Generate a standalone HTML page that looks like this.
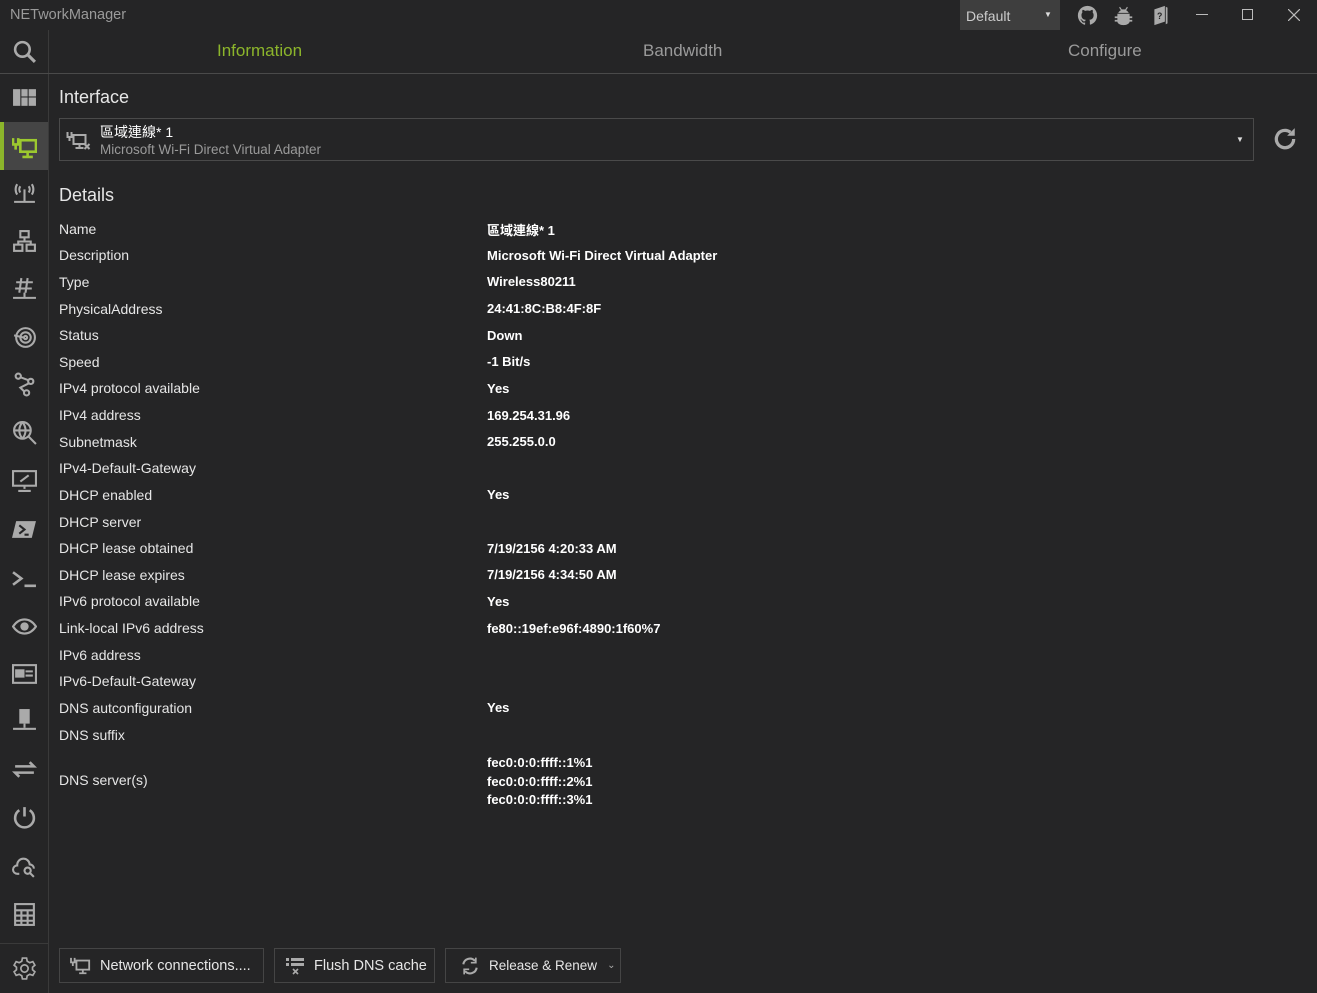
<!DOCTYPE html><html><head><meta charset="utf-8"><style>
*{margin:0;padding:0;box-sizing:border-box}
body{width:1317px;height:993px;background:#252526;font-family:"Liberation Sans","Noto Sans CJK TC",sans-serif;color:#e8e8e8;position:relative;overflow:hidden}
.a{position:absolute;white-space:nowrap}
.t{font-size:14px;color:#9a9a9a}
.tab{font-size:17px;top:41px;color:#9a9a9a}
.lbl{left:59px;font-size:14px;color:#e6e6e6}
.val{left:487px;font-size:13px;font-weight:bold;color:#fff}
.ic{position:absolute;left:12px;width:25px;height:25px}
.ic svg{width:25px;height:25px}
.btn{position:absolute;top:948px;height:35px;border:1px solid #454545;font-size:14.5px;color:#e6e6e6;display:flex;align-items:center;white-space:nowrap}
</style></head><body>
<div class="a t" style="left:10px;top:7px;font-size:14.5px">NETworkManager</div>
<div class="a" style="left:960px;top:0;width:100px;height:30px;background:#3e3e3e"></div>
<div class="a" style="left:966px;top:8px;font-size:14px;color:#ccc">Default</div>
<div class="a" style="left:1044px;top:10px;font-size:8px;color:#ddd">▼</div>
<svg class="a" style="left:1077px;top:5px" width="21" height="21" viewBox="0 0 24 24"><path fill="#aaa" d="M12 1C5.9 1 1 5.9 1 12c0 4.9 3.2 9 7.5 10.5.6.1.8-.2.8-.5v-2c-3.1.7-3.7-1.3-3.7-1.3-.5-1.3-1.2-1.6-1.2-1.6-1-.7.1-.7.1-.7 1.1.1 1.700 1.1 1.7 1.1 1 1.7 2.6 1.2 3.2.9.1-.7.4-1.2.7-1.5-2.4-.3-5-1.2-5-5.4 0-1.2.4-2.2 1.1-3-.1-.3-.5-1.4.1-2.9 0 0 .9-.3 3 1.1a10 10 0 0 1 5.5 0c2.1-1.4 3-1.1 3-1.1.6 1.5.2 2.6.1 2.9.7.8 1.1 1.8 1.1 3 0 4.2-2.6 5.1-5 5.4.4.3.7 1 .7 2v3c0 .3.2.6.8.5C19.8 21 23 16.9 23 12 23 5.9 18.1 1 12 1z"/></svg>
<svg class="a" style="left:1113px;top:5px" width="21" height="21" viewBox="0 0 24 24"><path fill="#aaa" d="M8 2l2 3h4l2-3 1 1-2 3c2 1 3 3 3 3H6s1-2 3-3L7 3zM5 10h14v3h3v2h-3v2h3v2h-3c0 2-3 4-7 4s-7-2-7-4H2v-2h3v-2H2v-2h3z"/></svg>
<svg class="a" style="left:1151px;top:5px" width="19" height="21" viewBox="0 0 20 24"><path fill="#aaa" d="M3 5l12-4v18L3 23zM16 2l2 1v18l-2 1z"/><text x="6" y="16" font-size="10" fill="#252526" font-weight="bold">?</text></svg>
<div class="a" style="left:1196px;top:14px;width:12px;height:1px;background:#bbb"></div>
<div class="a" style="left:1242px;top:9px;width:11px;height:11px;border:1px solid #bbb"></div>
<svg class="a" style="left:1288px;top:9px" width="12" height="12" viewBox="0 0 12 12"><path d="M0 0L12 12M12 0L0 12" stroke="#bbb" stroke-width="1.2"/></svg>

<div class="a" style="left:48px;top:30px;width:1px;height:963px;background:#3a3a3a"></div>
<div class="a" style="left:0;top:73px;width:1317px;height:1px;background:#4a4a4a"></div>
<div class="a" style="left:0;top:943px;width:48px;height:1px;background:#3a3a3a"></div>
<div class="a" style="left:0;top:122px;width:48px;height:48px;background:#454545"></div>
<div class="a" style="left:0;top:122px;width:4px;height:48px;background:#8cb52b"></div>

<div class="ic" style="top:39px"><svg viewBox="0 0 24 24"><circle cx="10" cy="10" r="7" fill="none" stroke="#aaa" stroke-width="2.5"/><path d="M15 15l7 7" stroke="#aaa" stroke-width="3"/></svg></div>
<div class="ic" style="top:85px"><svg viewBox="0 0 24 24" fill="#aaa"><rect x="1" y="4" width="7" height="16"/><rect x="9" y="4" width="6" height="7"/><rect x="16" y="4" width="7" height="7"/><rect x="9" y="12" width="6" height="8"/><rect x="16" y="12" width="7" height="8"/></svg></div>
<div class="ic" style="top:134px"><svg viewBox="0 0 24 24" fill="none" stroke="#9cc92f" stroke-width="2.5"><path d="M1 4v6h5V4M3.5 10v5"/><rect x="8" y="6" width="15" height="11"/><path d="M15 17v4M10 22h10"/></svg></div>
<div class="ic" style="top:180px"><svg viewBox="0 0 24 24" fill="none" stroke="#aaa" stroke-width="2"><path d="M5 4a9 9 0 0 0 0 10M19 4a9 9 0 0 1 0 10M8 6a5 5 0 0 0 0 6M16 6a5 5 0 0 1 0 6M12 9v11M2 21h20"/></svg></div>
<div class="ic" style="top:229px"><svg viewBox="0 0 24 24" fill="none" stroke="#aaa" stroke-width="2"><rect x="8" y="2" width="8" height="6"/><rect x="2" y="15" width="8" height="6"/><rect x="14" y="15" width="8" height="6"/><path d="M12 8v4H6v3M12 12h6v3"/></svg></div>
<div class="ic" style="top:276px"><svg viewBox="0 0 24 24" fill="none" stroke="#aaa" stroke-width="2"><path d="M9 2l-2 14M15 2l-2 14M4 6h16M3 12h16M12 16v4M1 21h22"/></svg></div>
<div class="ic" style="top:325px"><svg viewBox="0 0 24 24" fill="none" stroke="#aaa" stroke-width="2"><circle cx="13" cy="12" r="9"/><circle cx="13" cy="12" r="5"/><circle cx="13" cy="12" r="1.5"/><path d="M2 10l9 2"/></svg></div>
<div class="ic" style="top:372px"><svg viewBox="0 0 24 24" fill="none" stroke="#aaa" stroke-width="2"><circle cx="6" cy="4" r="2.5"/><circle cx="18" cy="9" r="2.5"/><circle cx="14" cy="20" r="2.5"/><path d="M8 5l8 3M16 11l-8 4 4 4"/></svg></div>
<div class="ic" style="top:420px"><svg viewBox="0 0 24 24" fill="none" stroke="#aaa" stroke-width="2"><circle cx="10" cy="10" r="8"/><path d="M2 10h16M10 2c-4 5-4 11 0 16M10 2c4 5 4 11 0 16M16 16l7 7"/></svg></div>
<div class="ic" style="top:468px"><svg viewBox="0 0 24 24" fill="none" stroke="#aaa" stroke-width="2"><rect x="1" y="3" width="22" height="14"/><path d="M12 17v3M6 22h12M8 13l8-6"/></svg></div>
<div class="ic" style="top:517px"><svg viewBox="0 0 24 24"><path d="M4 4h19l-4 16H0z" fill="#aaa"/><path d="M7 8l5 4-5 4M12 17h4" stroke="#252526" stroke-width="2" fill="none"/></svg></div>
<div class="ic" style="top:566px"><svg viewBox="0 0 24 24" fill="none" stroke="#aaa" stroke-width="2.5"><path d="M1 6l8 6-8 6M12 19h11"/></svg></div>
<div class="ic" style="top:614px"><svg viewBox="0 0 24 24" fill="none" stroke="#aaa" stroke-width="2"><path d="M1 12c6-9 16-9 22 0-6 9-16 9-22 0z"/><circle cx="12" cy="12" r="3" fill="#aaa"/></svg></div>
<div class="ic" style="top:662px"><svg viewBox="0 0 24 24" fill="none" stroke="#aaa" stroke-width="2"><rect x="1" y="3" width="22" height="17"/><rect x="4" y="8" width="7" height="6" fill="#aaa"/><path d="M13 9h7M13 13h7"/></svg></div>
<div class="ic" style="top:708px"><svg viewBox="0 0 24 24" fill="#aaa"><rect x="7" y="1" width="10" height="14"/><rect x="11" y="15" width="2" height="4"/><rect x="1" y="19" width="22" height="2"/></svg></div>
<div class="ic" style="top:757px"><svg viewBox="0 0 24 24" fill="none" stroke="#aaa" stroke-width="2.5"><path d="M3 9h18l-4-4M21 15H3l4 4"/></svg></div>
<div class="ic" style="top:805px"><svg viewBox="0 0 24 24" fill="none" stroke="#aaa" stroke-width="2.5"><path d="M12 2v9M7 5a9 9 0 1 0 10 0"/></svg></div>
<div class="ic" style="top:854px"><svg viewBox="0 0 24 24" fill="none" stroke="#aaa" stroke-width="2"><path d="M7 19H5a4 4 0 0 1 0-8 6 6 0 0 1 12-1 4 4 0 0 1 4 4"/><circle cx="15" cy="16" r="3"/><path d="M17 18l4 4"/></svg></div>
<div class="ic" style="top:902px"><svg viewBox="0 0 24 24" fill="none" stroke="#aaa" stroke-width="2"><rect x="3" y="2" width="18" height="20"/><path d="M3 8h18M3 13h18M3 18h18M9 8v14M15 8v14"/></svg></div>
<div class="ic" style="top:956px"><svg viewBox="0 0 24 24" fill="none" stroke="#aaa" stroke-width="1.6"><circle cx="12" cy="12" r="3.5"/><path d="M10 2h4l.6 3 2.5 1.4 2.9-1 2 3.4-2.3 2v2.4l2.3 2-2 3.4-2.9-1-2.5 1.4-.6 3h-4l-.6-3-2.5-1.4-2.9 1-2-3.4 2.3-2v-2.4l-2.3-2 2-3.4 2.9 1L9.4 5z"/></svg></div>

<div class="a tab" style="left:217px;color:#8cb52b">Information</div>
<div class="a tab" style="left:643px">Bandwidth</div>
<div class="a tab" style="left:1068px">Configure</div>

<div class="a" style="left:59px;top:87px;font-size:18px;color:#e6e6e6">Interface</div>
<div class="a" style="left:59px;top:118px;width:1195px;height:43px;border:1px solid #4a4a4a"></div>
<svg class="a" style="left:66px;top:130px" width="25" height="22" viewBox="0 0 24 22" fill="none" stroke="#aaa" stroke-width="2"><path d="M1 2v5h4V2M3 7v4"/><rect x="7" y="5" width="12" height="9"/><path d="M13 14v3M9 18h8M18 14l5 5M23 14l-5 5"/></svg>
<div class="a" style="left:100px;top:122px;font-size:14px;color:#fff">區域連線* 1</div>
<div class="a" style="left:100px;top:142px;font-size:13.5px;color:#9a9a9a">Microsoft Wi-Fi Direct Virtual Adapter</div>
<div class="a" style="left:1236px;top:135px;font-size:8px;color:#ddd">▼</div>
<svg class="a" style="left:1272px;top:126px" width="26" height="26" viewBox="0 0 24 24" fill="none" stroke="#aaa" stroke-width="3"><path d="M20 12a8 8 0 1 1-3-6.2"/><path d="M21 2v7h-7z" fill="#aaa" stroke="none"/></svg>

<div class="a" style="left:59px;top:185px;font-size:18px;color:#e6e6e6">Details</div>

<div class="a lbl" style="top:221px">Name</div><div class="a val" style="top:220px">區域連線* 1</div>
<div class="a lbl" style="top:247px">Description</div><div class="a val" style="top:248px">Microsoft Wi-Fi Direct Virtual Adapter</div>
<div class="a lbl" style="top:274px">Type</div><div class="a val" style="top:274px">Wireless80211</div>
<div class="a lbl" style="top:301px">PhysicalAddress</div><div class="a val" style="top:301px">24:41:8C:B8:4F:8F</div>
<div class="a lbl" style="top:327px">Status</div><div class="a val" style="top:328px">Down</div>
<div class="a lbl" style="top:354px">Speed</div><div class="a val" style="top:354px">-1 Bit/s</div>
<div class="a lbl" style="top:380px">IPv4 protocol available</div><div class="a val" style="top:381px">Yes</div>
<div class="a lbl" style="top:407px">IPv4 address</div><div class="a val" style="top:408px">169.254.31.96</div>
<div class="a lbl" style="top:434px">Subnetmask</div><div class="a val" style="top:434px">255.255.0.0</div>
<div class="a lbl" style="top:460px">IPv4-Default-Gateway</div>
<div class="a lbl" style="top:487px">DHCP enabled</div><div class="a val" style="top:487px">Yes</div>
<div class="a lbl" style="top:514px">DHCP server</div>
<div class="a lbl" style="top:540px">DHCP lease obtained</div><div class="a val" style="top:541px">7/19/2156 4:20:33 AM</div>
<div class="a lbl" style="top:567px">DHCP lease expires</div><div class="a val" style="top:567px">7/19/2156 4:34:50 AM</div>
<div class="a lbl" style="top:593px">IPv6 protocol available</div><div class="a val" style="top:594px">Yes</div>
<div class="a lbl" style="top:620px">Link-local IPv6 address</div><div class="a val" style="top:621px">fe80::19ef:e96f:4890:1f60%7</div>
<div class="a lbl" style="top:647px">IPv6 address</div>
<div class="a lbl" style="top:673px">IPv6-Default-Gateway</div>
<div class="a lbl" style="top:700px">DNS autconfiguration</div><div class="a val" style="top:700px">Yes</div>
<div class="a lbl" style="top:727px">DNS suffix</div>
<div class="a lbl" style="top:772px">DNS server(s)</div>
<div class="a val" style="top:754px;line-height:18.5px">fec0:0:0:ffff::1%1<br>fec0:0:0:ffff::2%1<br>fec0:0:0:ffff::3%1</div>

<div class="btn" style="left:59px;width:205px"><svg style="margin:0 8px 0 10px" width="22" height="20" viewBox="0 0 24 22" fill="none" stroke="#aaa" stroke-width="2"><path d="M1 2v5h4V2M3 7v4"/><rect x="7" y="5" width="14" height="10"/><path d="M14 15v3M10 19h8"/></svg>Network connections....</div>
<div class="btn" style="left:274px;width:161px"><svg style="margin:0 9px 0 10px" width="20" height="20" viewBox="0 0 20 20" fill="#aaa"><rect x="1" y="2" width="3" height="3"/><rect x="6" y="2" width="13" height="3"/><rect x="1" y="7" width="3" height="3"/><rect x="6" y="7" width="13" height="3"/><path d="M8 13l5 5M13 13l-5 5" stroke="#aaa" stroke-width="1.6"/></svg>Flush DNS cache</div>
<div class="btn" style="left:445px;width:176px;font-size:13.5px"><svg style="margin:0 9px 0 14px;flex:none" width="20" height="20" viewBox="0 0 24 24" fill="none" stroke="#aaa" stroke-width="2.5"><path d="M4 10a8 8 0 0 1 14-4M20 14a8 8 0 0 1-14 4"/><path d="M19 2v6h-6M5 22v-6h6" stroke-width="2"/></svg>Release &amp; Renew<span style="margin-left:10px;font-size:10px;color:#aaa">⌄</span></div>
</body></html>
